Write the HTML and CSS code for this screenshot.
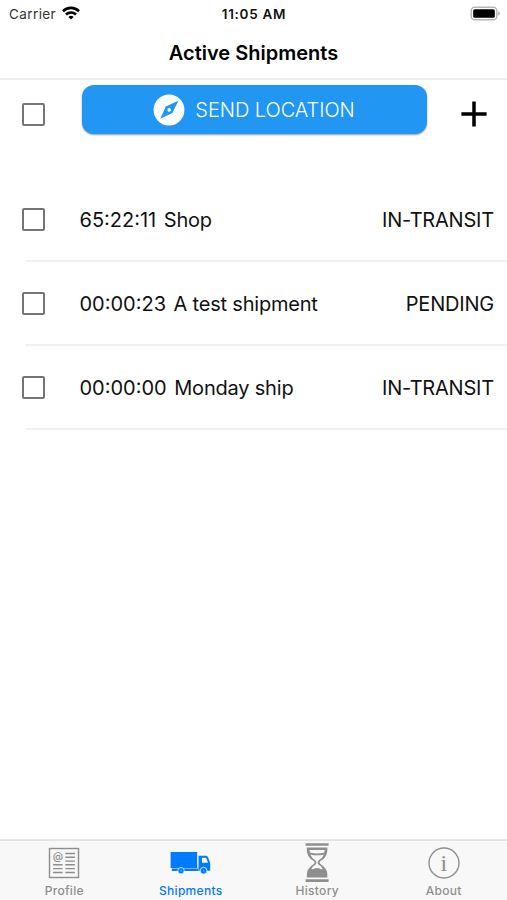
FILE: index.html
```html
<!DOCTYPE html>
<html lang="en">
<head>
    <meta charset="UTF-8">
    <meta name="viewport" content="width=device-width, initial-scale=1.0">
    <title>Active Shipments</title>
    <link rel="stylesheet" href="styles.css">
</head>
<body>

    <!-- Status bar -->
    <div class="status-bar">
        <div class="carrier">
            <span>Carrier</span>
            <svg width="18" height="14" viewBox="0 0 18 14" fill="none" stroke="#000" stroke-width="2.6">
                <path d="M1 5.2a11.4 11.4 0 0 1 16 0"/>
                <path d="M4 8.5a7.1 7.1 0 0 1 10 0"/>
                <path d="M9 13.6L6.4 11a3.8 3.8 0 0 1 5.2 0z" fill="#000" stroke="none"/>
            </svg>
        </div>
        <div class="time">11:05 AM</div>
        <svg class="battery" width="32" height="15" viewBox="0 0 32 15">
            <rect x="2.2" y="1.2" width="25.6" height="12.6" rx="3.6" fill="#fff" stroke="#b5b5b5" stroke-width="1.4"/>
            <rect x="4.2" y="3.2" width="21.6" height="8.6" rx="1.6"/>
            <path d="M29.2 5.2q1.8.7 1.8 2.3t-1.8 2.3z" fill="#b0b0b0"/>
        </svg>
    </div>

    <h1>Active Shipments</h1>

    <!-- Toolbar -->
    <div class="toolbar">
        <input type="checkbox" aria-label="Select all">
        <button class="send-button">
            <svg width="32" height="32" viewBox="0 0 32 32">
                <circle cx="16" cy="16" r="15.4" fill="#fff"/>
                <path d="M25.4 6.8L19.4 19.1 7.2 24.8 12.8 12.4z" fill="#2196f3"/>
                <circle cx="16.2" cy="15.9" r="1.8" fill="#fff"/>
            </svg>
            <span>SEND LOCATION</span>
        </button>
        <button class="add-button" aria-label="Add shipment">
            <svg width="26" height="26" viewBox="0 0 26 26" stroke="#000" stroke-width="3.5">
                <path d="M13 .4v25.2M.4 13h25.2"/>
            </svg>
        </button>
    </div>

    <!-- Shipments -->
    <ul class="shipments">
        <li>
            <input type="checkbox" aria-label="Select Shop">
            <div class="row">
                <span class="timer">65:22:11</span>
                <span class="name">Shop</span>
                <span class="status">IN-TRANSIT</span>
            </div>
        </li>
        <li>
            <input type="checkbox" aria-label="Select A test shipment">
            <div class="row">
                <span class="timer">00:00:23</span>
                <span class="name">A test shipment</span>
                <span class="status">PENDING</span>
            </div>
        </li>
        <li>
            <input type="checkbox" aria-label="Select Monday ship">
            <div class="row">
                <span class="timer">00:00:00</span>
                <span class="name">Monday ship</span>
                <span class="status">IN-TRANSIT</span>
            </div>
        </li>
    </ul>

    <!-- Tabs -->
    <nav class="tabs">
        <a class="tab">
            <svg width="42" height="42" viewBox="0 0 42 42" fill="none" stroke="#8e8e8e" stroke-width="1.4">
                <rect x="6.5" y="6.5" width="29" height="29"/>
                <text x="9.8" y="18.2" font-size="10.5" fill="#8e8e8e" stroke="none">@</text>
                <path d="M22.3 11.5h9.6M22.3 15.3h9.6M22.3 19.1h9.6M10 22.8h9.6M22.3 22.8h9.6M10 26.6h9.6M22.3 26.6h9.6M10 30.5h9.6M22.3 30.5h9.6"/>
            </svg>
            <span>Profile</span>
        </a>
        <a class="tab active">
            <svg width="42" height="42" viewBox="0 0 42 42" fill="#007aff">
                <path d="M.6 10h26.6v16H.6z"/>
                <path d="M1.8 26.5h26.5V29H1.8z"/>
                <path fill-rule="evenodd" d="M28.6 13.8H36q1.5 0 2 1.5l1.7 4.4q.5 1 .5 2.2v6.9H28.6zM32 15.7v5h6l-1.5-4q-.4-1-1.4-1z"/>
                <circle cx="11" cy="28.7" r="3.2" stroke="#f8f8f8" stroke-width=".8"/>
                <circle cx="33.6" cy="28.7" r="3.4" stroke="#f8f8f8" stroke-width=".8"/>
                <circle cx="11" cy="28.7" r=".7" fill="#7ab8ff"/>
                <circle cx="33.6" cy="28.7" r=".7" fill="#7ab8ff"/>
            </svg>
            <span>Shipments</span>
        </a>
        <a class="tab">
            <svg width="42" height="42" viewBox="0 0 42 42" fill="#8e8e8e">
                <path d="M9.6 1.2h23v2.6h-23zM9.6 37.2h23V40h-23z"/>
                <path d="M10.8 5.4h20.6q.8 9.5-7 13.6-1.8 1.500 0 3 7.8 4.400 7 13.400H10.800q-.8-9 7-13.400 1.800-1.500 0-3Q10 14.900 10.800 5.400z"/>
                <path d="M13.6 8h15l-.3 2.500q-7.200 1.800-14.400 0zM14.300 12.400q6.800 1.800 13.600 0-1.200 3.400-5.200 5.800-2.200 2.300 0 4.600 2.800 1.600 4 4.200-2 .6-3.200-.4-2.500-1.400-5 0-1.200 1-3.200.4 1.200-2.600 4-4.200 2.200-2.300 0-4.600-3.800-2.400-5-5.800z" fill="#f8f8f8"/>
            </svg>
            <span>History</span>
        </a>
        <a class="tab">
            <svg width="42" height="42" viewBox="0 0 42 42">
                <circle cx="21" cy="21" r="15" fill="none" stroke="#8e8e8e" stroke-width="1.4"/>
                <text class="info" x="21" y="28.6" font-size="24" text-anchor="middle" fill="#8e8e8e">i</text>
            </svg>
            <span>About</span>
        </a>
    </nav>

</body>
</html>
```
FILE: styles.css
```css
* {
    box-sizing: border-box;
}
body {
    display: flex;
    flex-direction: column;
    height: 900px;
    margin: 0;
    background: #fff;
    color: #111;
    font-family: Inter, "Liberation Sans", sans-serif;
}
.status-bar {
    display: grid;
    grid-template-columns: 1fr auto 1fr;
    align-items: center;
    height: 27px;
    padding: 0 6px 0 9px;
    font-size: 13.5px;
}
.carrier {
    display: flex;
    align-items: center;
    gap: 6px;
    color: #333;
    letter-spacing: 0.4px;
}
.carrier svg {
    margin-top: -2px;
}
.time {
    margin-right: 2px;
    font-weight: 600;
    letter-spacing: 0.7px;
}
.battery {
    justify-self: end;
}
h1 {
    height: 53px;
    margin: 0;
    border-bottom: 2px solid #eee;
    color: #000;
    font-size: 20px;
    font-weight: 600;
    line-height: 52px;
    text-align: center;
}
input[type="checkbox"] {
    appearance: none;
    flex: none;
    width: 23px;
    height: 23px;
    margin: 0 0 0 22px;
    border: 2px solid #757575;
    border-radius: 2px;
}
button {
    padding: 0;
    border: none;
    background: none;
    font-family: inherit;
}
.toolbar {
    display: flex;
    align-items: center;
    height: 98px;
    padding-bottom: 30px;
}
.send-button {
    display: flex;
    align-items: center;
    justify-content: center;
    gap: 10px;
    width: 345px;
    height: 49px;
    margin: -9px 34px 0 36.5px;
    border-radius: 12px;
    background: #2196f3;
    box-shadow: 0 1px 2px rgba(0, 0, 0, 0.4);
    color: #fff;
    font-size: 20px;
    font-weight: 300;
    letter-spacing: -0.05px;
}
.add-button svg {
    display: block;
}
.shipments {
    flex: 1;
    margin: 0;
    padding: 0;
    list-style: none;
}
.shipments li {
    display: flex;
    align-items: center;
    height: 84px;
    padding-bottom: 1px;
    background: linear-gradient(#f2f2f2, #f2f2f2) 25px 100% / 100% 2px no-repeat;
}
.row {
    display: flex;
    flex: 1;
    gap: 8px;
    padding: 1px 13px 0 34.5px;
    font-size: 20px;
}
.name {
    margin-left: -0.5px;
    letter-spacing: -0.2px;
}
.status {
    margin-left: auto;
    letter-spacing: -0.2px;
}
.tabs {
    display: grid;
    grid-template-columns: repeat(4, 1fr);
    height: 61px;
    padding-left: 1px;
    border-top: 2px solid #e4e4e4;
    background: #f8f8f8;
}
.tab {
    display: flex;
    flex-direction: column;
    align-items: center;
    padding-top: 1px;
    color: #8e8e8e;
    font-size: 12px;
    font-weight: 500;
    line-height: 14px;
    letter-spacing: 0.3px;
}
.tab svg {
    flex: none;
}
.tab.active {
    color: #007aff;
}
.info {
    font-family: "Liberation Serif", serif;
}
```
